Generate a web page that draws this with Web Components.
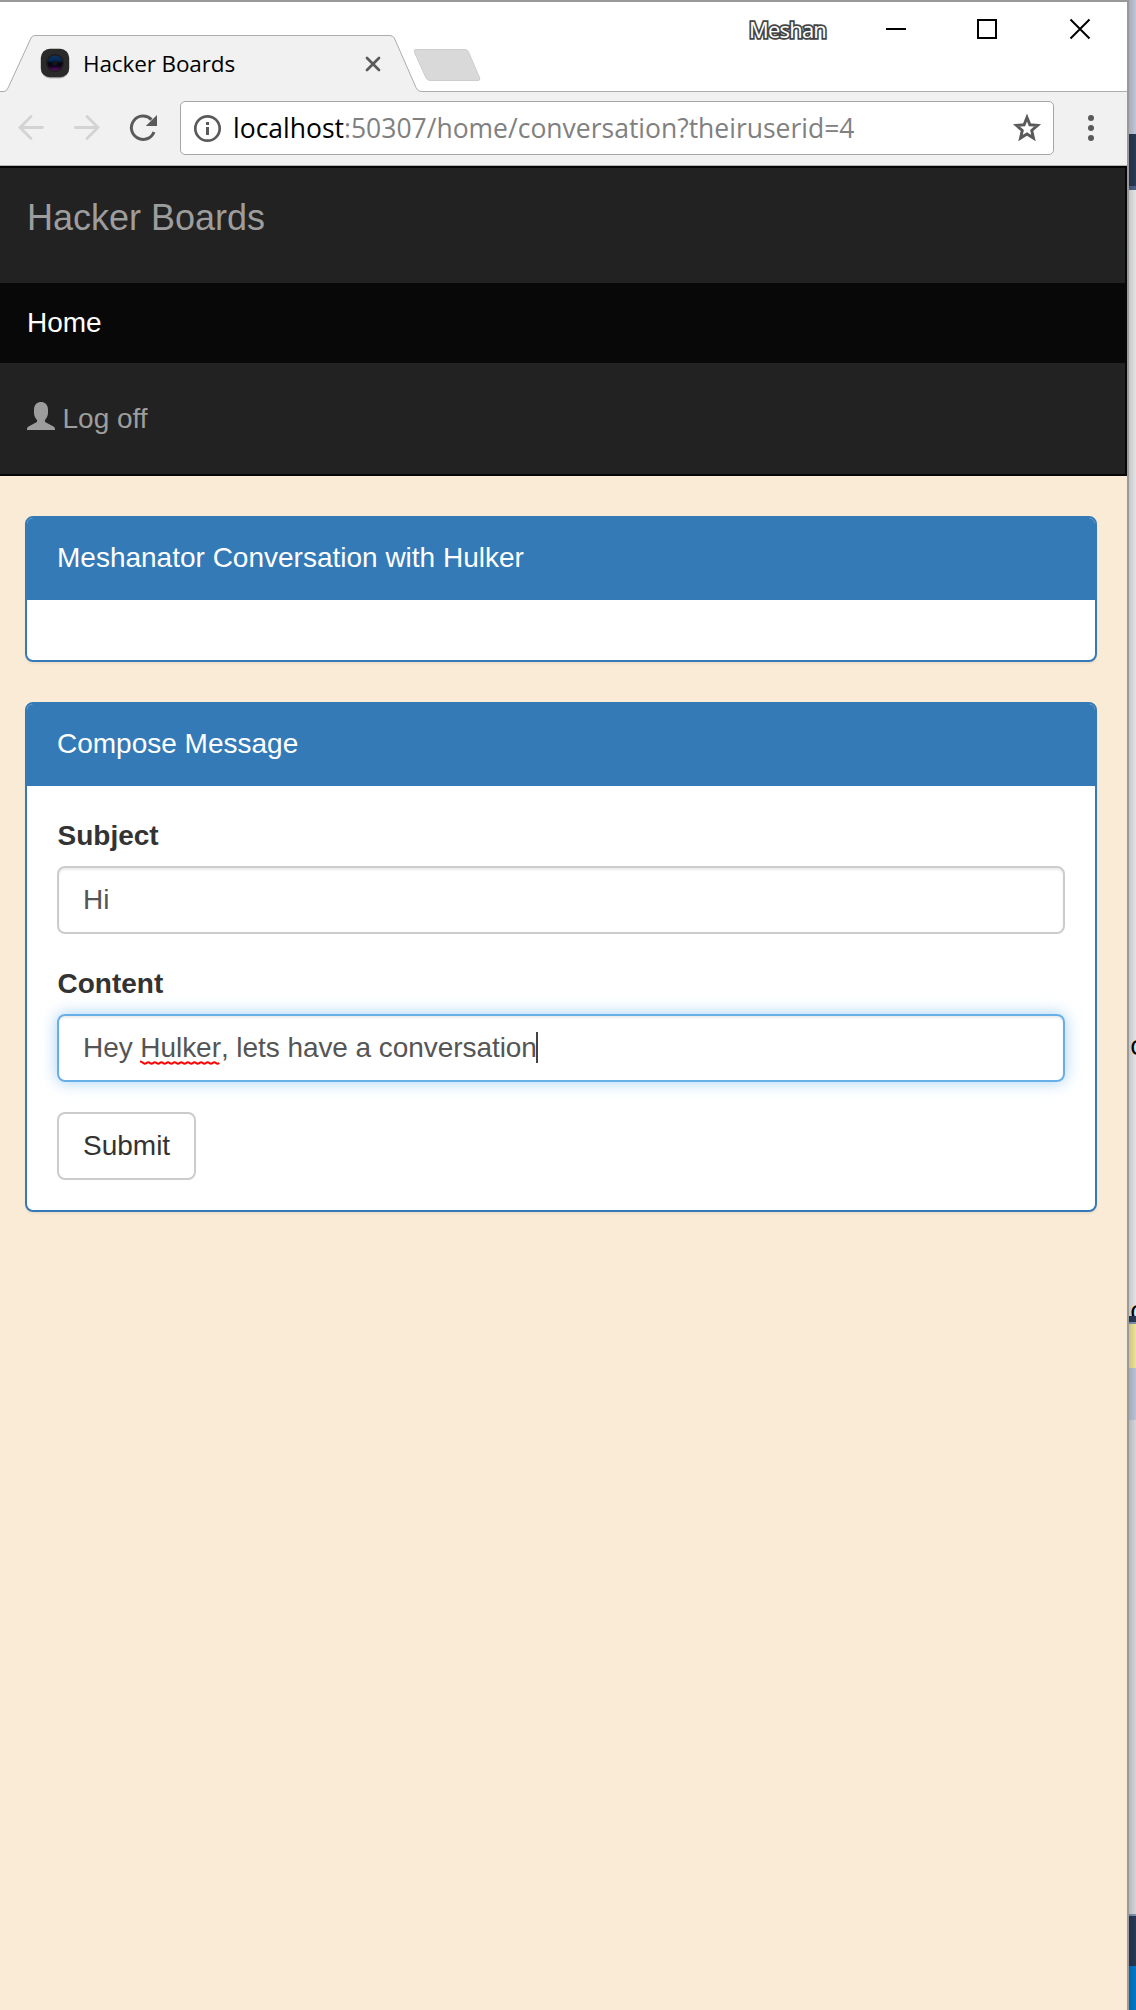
<!DOCTYPE html>
<html lang="en">
<head>
<meta charset="utf-8">
<title>Hacker Boards</title>
<style>
html,body{margin:0;padding:0}
body{width:1136px;height:2010px;overflow:hidden;background:#faebd7;font-family:"Liberation Sans",Arial,sans-serif}
</style>
</head>
<body>
<desktop-view></desktop-view>
<script>
function define(name, html, after) {
  customElements.define(name, class extends HTMLElement {
    connectedCallback() {
      if (this.shadowRoot) return;
      const t = document.createElement('template');
      t.innerHTML = '<style>*{box-sizing:border-box}</style>' + html;
      this.attachShadow({mode: 'open'}).appendChild(t.content.cloneNode(true));
      if (after) after(this);
    }
  });
}

/* Text tracked so that its advance equals the given width. */
define('fit-text', `<style>:host{display:inline-block;white-space:pre}</style><slot></slot>`, el => {
  const w = el.getBoundingClientRect().width;
  const n = el.textContent.length;
  el.style.letterSpacing = ((+el.getAttribute('width') - w) / n) + 'px';
});

define('window-buttons', `<style>
:host{display:flex;position:absolute;right:0;top:0;height:46px;align-items:flex-start}
.user{font:22px/30px "Open Sans","Noto Sans",sans-serif;color:#fff;-webkit-text-stroke:3.500px #444;paint-order:stroke fill;margin:12px 60px 0 0}
svg{display:block}
</style>
<div class="user"><fit-text width="77">Meshan</fit-text></div>
<svg width="241" height="46" viewBox="886 2 241 46" fill="none" stroke="#000" stroke-width="2"><path d="M886 29h20"/><path d="M978 20h18v18h-18z"/><path d="M1070.500 19.500l19 19M1089.500 19.500l-19 19"/></svg>`);

define('tab-strip', `<style>
:host{display:block;position:relative;height:90px;background:#fff}
.shape{display:block;position:absolute;left:0;top:0}
.row{position:relative;display:flex;align-items:center;padding:33px 0 0 40px;height:90px}
.title{font:22.500px/30px "Open Sans","Noto Sans",sans-serif;color:#000;margin:0 0 0 13px;width:270px}
.fav{display:block;margin-bottom:1px}
.x{display:block;margin:0 0 0 7px}
</style>
<svg class="shape" width="1127" height="90" viewBox="0 2 1127 90">
<path d="M0 91.500H4Q6.500 91.500 8 88L31 38Q32.200 35.500 35 35.500H390Q393 35.500 394.300 38L416 87.500Q417.800 91.500 421 91.500H1127V93H0z" fill="#f1f1f1" stroke="#acacac"/>
<path d="M416 49.500H465Q467.500 49.500 468.500 52L479.500 77.500Q480.700 80.500 478 80.500H430Q427.500 80.500 426 78L414.500 52.500Q413.300 49.500 416 49.500z" fill="#d9d9d9" stroke="#cdcdcd"/>
</svg>
<div class="row">
<svg class="fav" width="30" height="31" viewBox="0 0 30 31"><defs><linearGradient id="g" x1="0" y1="0" x2="0" y2="1"><stop offset="0" stop-color="#0a3566"/><stop offset=".35" stop-color="#062750"/><stop offset=".5" stop-color="#05070c"/><stop offset=".72" stop-color="#12041a"/><stop offset="1" stop-color="#630b74"/></linearGradient></defs>
<rect x="1" y="2" width="28" height="28.500" rx="9" fill="#b5b5b5"/><rect x=".8" y=".8" width="28.400" height="28.400" rx="9" fill="#2a2a2a"/><circle cx="15" cy="15" r="9" fill="#1d1d1d"/><circle cx="15" cy="15" r="7.500" fill="url(#g)"/><circle cx="15" cy="15" r="2.500" fill="#14171c"/></svg>
<div class="title"><fit-text width="152">Hacker Boards</fit-text></div>
<svg class="x" width="26" height="20" viewBox="0 0 26 20"><path d="M7 4l12 12M19 4L7 16" stroke="#5a5a5a" stroke-width="2.700" stroke-linecap="round"/></svg>
</div>
<window-buttons></window-buttons>`);

define('tool-bar', `<style>
:host{display:flex;height:74px;background:#f1f1f1;border-bottom:1px solid #b2b7b4;align-items:flex-start}
.nav,.dots{display:block}
.omni{margin-top:9px;width:874px;height:54px;border:1px solid #a6a6a6;border-radius:5px;background:#fff;display:flex;align-items:center}
.url{font:26.500px/36px "Open Sans","Noto Sans",sans-serif;color:#808080;width:777px;margin:-1px 1px 0 10px}
.url b{font-weight:400;color:#000}
</style>
<svg class="nav" width="180" height="73" viewBox="0 92 180 73" fill="none">
<g stroke="#d3d3d3" stroke-width="2.800" stroke-linecap="round"><path d="M20 127.500H42.500M31 116.500L20 127.500L31 138.500"/><path d="M75.500 127.500H98M87 116.500L98 127.500L87 138.500"/></g>
<path d="M154 132A11.700 11.700 0 1 1 151.500 119.600" stroke="#5a5a5a" stroke-width="3"/><path d="M157 115v11h-11.200z" fill="#5a5a5a"/></svg>
<div class="omni">
<svg width="42" height="52" viewBox="181 102 42 52" style="flex:none"><circle cx="207.500" cy="128.500" r="12.200" fill="none" stroke="#5a5a5a" stroke-width="2.700"/><path d="M206 122h3v3h-3zM206 127h3v8h-3z" fill="#5a5a5a"/></svg>
<div class="url"><fit-text width="621.500"><b>localhost</b>:50307/home/conversation?theiruserid=4</fit-text></div>
<svg width="34" height="32" viewBox="1011 112.500 34 32" style="flex:none"><path d="M1027 118L1029.900 125.300L1037.500 125.900L1031.700 130.900L1033.500 138.600L1027 134.500L1020.500 138.600L1022.300 130.900L1016.500 125.900L1024.100 125.300z" fill="none" stroke="#5a5a5a" stroke-width="2.900"/></svg>
</div>
<svg class="dots" width="73" height="73" viewBox="1054 92 73 73" fill="#5a5a5a"><circle cx="1091" cy="118" r="3"/><circle cx="1091" cy="128" r="3"/><circle cx="1091" cy="138" r="3"/></svg>`);

define('user-icon', `<style>:host{display:block;width:28px;height:28px}svg{display:block}</style>
<svg width="28" height="28" viewBox="0 0 28 28" fill="#9d9d9d"><path d="M14 0C17.500 0 21 2.400 21 7.500V11C21 14.500 19.200 16.300 18 18C17.700 19.500 18 20 19 20.500L26.500 24.600Q28 25.500 28 27V28H0V27Q0 25.500 1.500 24.600L9 20.500C10 20 10.300 19.500 10 18C8.800 16.300 7 14.500 7 11V7.500C7 2.400 10.500 0 14 0z"/></svg>`);

define('nav-bar', `<style>
:host{display:flex;flex-direction:column;height:310px;background:#222;border:2px solid #080808;border-left:0;border-top-color:#060606;border-bottom-color:#060606;color:#9d9d9d;font-size:28px;line-height:40px}
.brand{font-size:36px;padding:30px 27px;height:100px;margin-bottom:15px}
.item{height:80px;padding:20px 27px;display:flex}
.active{background:#080808;color:#fff;margin-bottom:16px}
user-icon{margin:3px 7.500px 0 0}
</style>
<div class="brand">Hacker Boards</div>
<div class="item active">Home</div>
<div class="item"><user-icon></user-icon><span>Log off</span></div>`);

define('message-panel', `<style>
:host{display:block;background:#fff;border:2px solid #337ab7;border-radius:8px;box-shadow:0 2px 2px rgba(0,0,0,.05);font-size:28px;line-height:40px}
.head{height:82px;padding:20px 30px;background:#337ab7;color:#fff;border-radius:6px 6px 0 0}
.body{padding:30px}
</style><div class="head"><slot name="title"></slot></div><div class="body"><slot></slot></div>`);

define('form-field', `<style>
:host{display:block;margin-bottom:30px;color:#555}
.label{font-weight:700;color:#333;margin-bottom:10px;text-indent:.500px}
.input{height:68px;border:2px solid #ccc;border-radius:8px;padding:12px 24px;box-shadow:inset 0 2px 2px rgba(0,0,0,.075);display:flex;align-items:center;white-space:pre}
:host([focused]) .input{border-color:#66afe9;box-shadow:inset 0 2px 2px rgba(0,0,0,.075),0 0 16px rgba(102,175,233,.6);letter-spacing:-.06px}
.caret{display:none;width:2px;height:31px;background:#444;margin:-1px 0 0 -1px}
:host([focused]) .caret{display:block}
</style><div class="label"><slot name="label"></slot></div><div class="input"><span><slot></slot></span><i class="caret"></i></div>`);

define('misspelled-word', `<style>:host{position:relative;display:inline-block}svg{position:absolute;left:0;top:32px}</style><slot></slot><svg width="80" height="6" viewBox="0 0 80 6"><path d="M0 1.500Q1.600 1.500 3.300 3T6.600 3T9.900 3T13.200 3T16.500 3T19.800 3T23.100 3T26.400 3T29.700 3T33 3T36.300 3T39.600 3T42.900 3T46.200 3T49.500 3T52.800 3T56.100 3T59.400 3T62.700 3T66 3T69.300 3T72.600 3T75.900 3T79.200 3" fill="none" stroke="red" stroke-width="2"/></svg>`);

define('submit-button', `<style>:host{display:block;width:139px;height:68px;border:2px solid #ccc;border-radius:8px;background:#fff;color:#333;padding:12px 24px;white-space:nowrap}</style><slot></slot>`);

define('page-body', `<style>
:host{display:flex;flex-direction:column;gap:40px;flex:1;background:#faebd7;padding:40px 30px 0 25px}
</style>
<message-panel><span slot="title">Meshanator Conversation with Hulker</span></message-panel>
<message-panel><span slot="title">Compose Message</span>
<form-field><span slot="label">Subject</span>Hi</form-field>
<form-field focused><span slot="label">Content</span>Hey <misspelled-word>Hulker</misspelled-word>, lets have a conversation</form-field>
<submit-button>Submit</submit-button>
</message-panel>`);

define('browser-window', `<style>
:host{display:flex;flex-direction:column;width:1129px;height:2010px;border-top:2px solid #999;border-right:2px solid #999}
</style><tab-strip></tab-strip><tool-bar></tool-bar><nav-bar></nav-bar><page-body></page-body>`);

define('background-window', `<style>
:host{display:flex;flex-direction:column;width:7px;height:2010px;overflow:hidden;position:relative;font:27px/26px "Open Sans","Noto Sans",sans-serif;color:#000}
:host::after{content:"";position:absolute;inset:0;background:linear-gradient(90deg,rgba(0,0,0,.14),rgba(0,0,0,.01))}
div{flex:none;overflow:hidden}
.c{padding-left:1px}
</style>
<div style="height:134px;background:#c3c8da"></div>
<div style="height:52px;background:#293955"></div>
<div style="height:4px;background:#4d6082"></div>
<div style="height:842px;background:#e6e7e8"></div>
<div class="c" style="height:265px;background:#e6e7e8">c</div>
<div class="c" style="height:19px;background:#e6e7e8">c</div>
<div style="height:6px;background:#293955"></div>
<div style="height:2px;background:#8592b5"></div>
<div style="height:44px;background:#f0e59a"></div>
<div style="height:52px;background:#bcc5d8"></div>
<div style="height:494px;background:#d6d6dc"></div>
<div style="height:2px;background:#8592b5"></div>
<div style="height:50px;background:#293955"></div>
<div style="height:44px;background:#007acc"></div>`);

define('desktop-view', `<style>:host{display:flex;width:1136px;height:2010px}</style><browser-window></browser-window><background-window></background-window>`);
</script>
</body>
</html>
